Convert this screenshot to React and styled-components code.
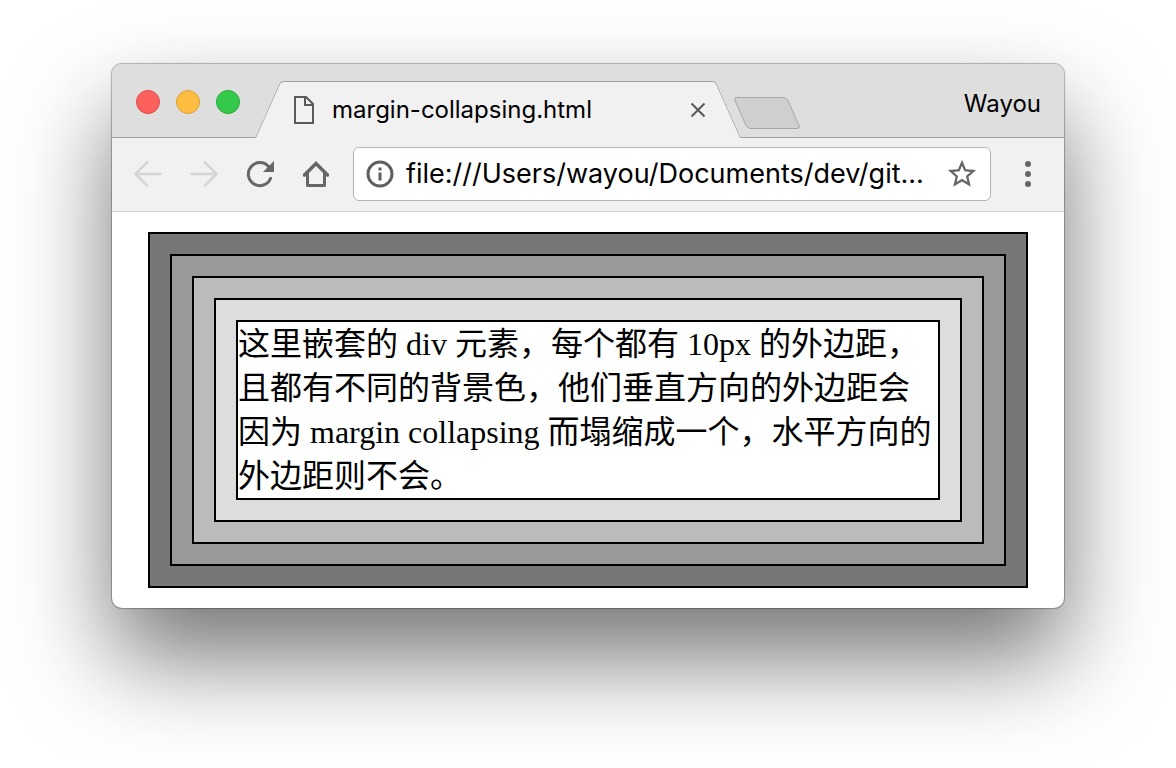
import React from "react";
import styled, { createGlobalStyle } from "styled-components";

const GlobalStyle = createGlobalStyle`
  * { box-sizing: border-box; }
  body {
    margin: 0;
    background: #fff;
    color: #000;
    font-family: Inter, "Noto Sans CJK SC", sans-serif;
  }
`;

const Desktop = styled.main`
  padding: 64px 112px 160px;
  overflow: hidden;
`;

const Window = styled.section`
  border-radius: 10px;
  background: #fff;
  box-shadow: 0 0 1px 1px rgba(0, 0, 0, 0.28), 0 50px 96px rgba(0, 0, 0, 0.54);
`;

const TitleBar = styled.header`
  display: flex;
  height: 74px;
  padding: 0 23px 0 24px;
  background: #dedede;
  border-bottom: 1px solid #a0a0a0;
  border-radius: 10px 10px 0 0;
`;

const Lights = styled.div`
  display: flex;
  gap: 16px;
  padding-top: 26px;
  margin-right: 15px;
`;

const Light = styled.button`
  width: 24px;
  height: 24px;
  padding: 0;
  border: 1px solid ${(p) => p.$edge};
  border-radius: 50%;
  background: ${(p) => p.$fill};
`;

const Tab = styled.div`
  position: relative;
  z-index: 0;
  display: flex;
  align-items: center;
  flex: 0 1 485px;
  min-width: 0;
  height: 57px;
  margin-top: 17px;
  padding: 0 34px 0 38px;

  &::before,
  &::after {
    content: "";
    position: absolute;
    z-index: -1;
    top: 0;
    bottom: 0;
    background: #f1f1f1;
    border: 1px solid #a0a0a0;
    border-bottom: 0;
  }
  &::before {
    left: 0;
    right: 50%;
    border-right: 0;
    border-radius: 4px 0 0 0;
    transform: skewX(-24deg);
    transform-origin: bottom;
  }
  &::after {
    left: 50%;
    right: 0;
    border-left: 0;
    border-radius: 0 4px 0 0;
    transform: skewX(24deg);
    transform-origin: bottom;
  }
`;

const TabTitle = styled.span`
  flex: 1;
  min-width: 0;
  margin-left: 17px;
  overflow: hidden;
  white-space: nowrap;
  font-size: 24px;
  line-height: 32px;
`;

const IconButton = styled.button`
  display: flex;
  align-items: center;
  justify-content: center;
  flex: none;
  width: ${(p) => p.$width}px;
  height: 32px;
  padding: 0;
  border: 0;
  background: none;
  color: ${(p) => (p.disabled ? "#d5d5d5" : "#666")};
`;

const NewTab = styled.button`
  flex: none;
  width: 54px;
  height: 32px;
  margin-top: 33px;
  padding: 0;
  border: 1px solid #a6a6a6;
  border-radius: 4px;
  background: #cfcfcf;
  transform: skewX(24deg);
`;

const Profile = styled.button`
  margin: 24px 0 0 auto;
  padding: 0;
  border: 0;
  background: none;
  color: #000;
  font: inherit;
  font-size: 24px;
  line-height: 32px;
  height: 32px;
`;

const Toolbar = styled.nav`
  display: flex;
  align-items: center;
  height: 74px;
  padding: 0 8px 1px;
  background: #f1f1f1;
  border-bottom: 1px solid #d2d2d2;
`;

const AddressBar = styled.label`
  display: flex;
  align-items: center;
  flex: 1;
  min-width: 0;
  height: 54px;
  margin: 0 9px;
  padding: 0 11px 0 10px;
  border: 1px solid #b6b6b6;
  border-radius: 6px;
  background: #fff;
  color: #5f5f5f;
`;

const AddressInput = styled.input`
  flex: 1;
  min-width: 0;
  margin: 0 8px 0 10px;
  padding: 0;
  border: 0;
  outline: 0;
  background: none;
  color: #000;
  font: inherit;
  font-size: 27px;
  line-height: 40px;
`;

const Page = styled.article`
  padding: 20px 36px;
`;

const Layer = styled.div`
  padding: 20px;
  border: 2px solid #000;
  background: ${(p) => p.$shade};
`;

const Paragraph = styled.p`
  margin: 0;
  border: 2px solid #000;
  background: #fff;
  font-family: "Liberation Serif", "Noto Sans CJK SC", serif;
  font-size: 32px;
  line-height: 44px;
`;

const Icon = ({ size = 32, children }) => (
  <svg width={size} height={size} viewBox={`0 0 ${size} ${size}`} fill="none" stroke="currentColor" strokeWidth="3" aria-hidden="true">
    {children}
  </svg>
);

const FileIcon = () => (
  <svg width="22" height="30" viewBox="0 0 22 30" fill="none" stroke="#5a5a5a" strokeWidth="2" aria-hidden="true">
    <path d="M2 2h11l7 7v19H2z" />
    <path d="M12 2v8h8" />
  </svg>
);

const layers = ["#777", "#999", "#bbb", "#ddd"];

const text =
  "这里嵌套的 div 元素，每个都有 10px 的外边距，且都有不同的背景色，他们垂直方向的外边距会因为 margin collapsing 而塌缩成一个，水平方向的外边距则不会。";

export default function App() {
  return (
    <>
      <GlobalStyle />
      <Desktop>
        <Window>
          <TitleBar>
            <Lights>
              <Light aria-label="Close" $fill="#fc615d" $edge="#e0474a" />
              <Light aria-label="Minimize" $fill="#fdbd41" $edge="#de9f34" />
              <Light aria-label="Zoom" $fill="#34c94b" $edge="#26a934" />
            </Lights>
            <Tab>
              <FileIcon />
              <TabTitle>margin-collapsing.html</TabTitle>
              <IconButton $width={16} aria-label="Close tab">
                <svg width="16" height="16" viewBox="0 0 16 16" stroke="#5a5a5a" strokeWidth="2" aria-hidden="true">
                  <path d="M1.5 1.5l13 13M14.5 1.5l-13 13" />
                </svg>
              </IconButton>
            </Tab>
            <NewTab aria-label="New tab" />
            <Profile>Wayou</Profile>
          </TitleBar>
          <Toolbar>
            <IconButton $width={56} disabled aria-label="Back">
              <Icon>
                <path d="M28.500 16H5M15 4.500L3.500 16L15 27.500" strokeLinecap="round" strokeLinejoin="round" strokeWidth="2.600" />
              </Icon>
            </IconButton>
            <IconButton $width={56} disabled aria-label="Forward">
              <Icon>
                <path d="M3.500 16H27M17 4.500L28.500 16L17 27.500" strokeLinecap="round" strokeLinejoin="round" strokeWidth="2.600" />
              </Icon>
            </IconButton>
            <IconButton $width={56} aria-label="Reload">
              <Icon>
                <path d="M26.500 20.500A11.500 11.500 0 1 1 24.500 8.500" strokeLinecap="round" />
                <path d="M30 3v11H19z" fill="currentColor" stroke="none" />
              </Icon>
            </IconButton>
            <IconButton $width={56} aria-label="Home">
              <Icon>
                <path d="M4.500 17L16 5.500L27.500 17" strokeLinecap="round" strokeWidth="3.500" />
                <path d="M7.500 15v12.500h17V15" strokeLinejoin="round" />
              </Icon>
            </IconButton>
            <AddressBar>
              <Icon>
                <circle cx="16" cy="16" r="12" />
                <path d="M16 9.500v3M16 14.500v8" />
              </Icon>
              <AddressInput aria-label="Address" defaultValue="file:///Users/wayou/Documents/dev/git..." />
              <IconButton as="span" $width={34}>
                <svg width="34" height="34" viewBox="0 0 24 24" fill="#666" aria-hidden="true">
                  <path d="M22 9.240l-7.190-.62L12 2 9.190 8.630 2 9.240l5.460 4.730L5.820 21 12 17.270 18.180 21l-1.630-7.030L22 9.240zM12 15.400l-3.760 2.270 1-4.280-3.320-2.880 4.380-.38L12 6.100l1.710 4.040 4.380.38-3.320 2.880 1 4.280L12 15.400z" />
                </svg>
              </IconButton>
            </AddressBar>
            <IconButton $width={56} aria-label="Menu">
              <Icon>
                <g fill="currentColor" stroke="none">
                  <circle cx="16" cy="6" r="3" />
                  <circle cx="16" cy="16" r="3" />
                  <circle cx="16" cy="26" r="3" />
                </g>
              </Icon>
            </IconButton>
          </Toolbar>
          <Page lang="zh-CN">
            {layers.reduceRight((inner, shade) => <Layer $shade={shade}>{inner}</Layer>, <Paragraph>{text}</Paragraph>)}
          </Page>
        </Window>
      </Desktop>
    </>
  );
}
